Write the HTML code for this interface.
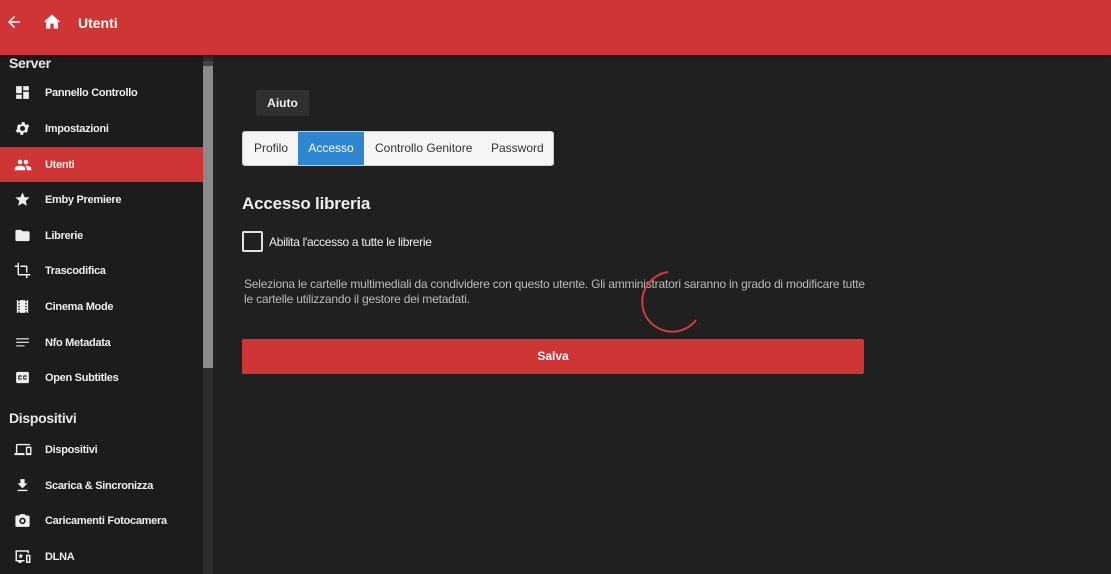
<!DOCTYPE html>
<html><head><meta charset="utf-8"><style>
*{margin:0;padding:0;box-sizing:border-box}
body{width:1111px;height:574px;overflow:hidden;background:#202020;font-family:"Liberation Sans",sans-serif;position:relative;color:#ddd}
.hdr{position:absolute;left:0;top:0;width:1111px;height:55px;background:#cf3535;box-shadow:0 1px 4px rgba(0,0,0,.5);z-index:2}
.hdr .t{position:absolute;left:78px;top:15px;font-size:14px;font-weight:bold;color:#fff}
.side{position:absolute;left:0;top:55px;width:203px;height:519px;background:#1c1c1c}
.sb{position:absolute;left:203px;top:55px;width:10px;height:519px;background:#2d2d2d}
.sb .a{position:absolute;left:0;top:6px;width:10px;height:10px;background:#444}
.sb .th{position:absolute;left:0;top:11px;width:10px;height:302px;background:#8a8a8a}
.sec{position:absolute;left:9px;font-size:14px;font-weight:bold;color:#e6e6e6;letter-spacing:-.3px}
.it{position:absolute;left:0;width:203px;height:35px;font-size:11px;font-weight:bold;color:#eee;letter-spacing:-.3px}
.it span{position:absolute;left:45px;top:12px}
.it svg{position:absolute;left:14px;top:9px}
.it.on{background:#cf3535}
.btn{position:absolute;left:256px;top:90px;width:53px;height:26px;background:#303030;border-radius:2px;color:#eee;font-size:12px;font-weight:bold;text-align:center;line-height:26px}
.tabs{position:absolute;left:242px;top:131px;width:312px;height:35px;background:#f5f5f5;border:1px solid #ccc;border-radius:3px;font-size:12px;color:#333}
.tabs div{position:absolute;top:0;height:33px;line-height:32px;white-space:nowrap}
h2{position:absolute;left:242px;top:194px;font-size:17px;font-weight:bold;color:#eee;letter-spacing:-.2px}
.cb{position:absolute;left:242px;top:231px;width:21px;height:21px;border:2px solid #e0e0e0;border-radius:2px}
.cbl{position:absolute;left:269px;top:235px;font-size:12px;color:#eee;letter-spacing:-.3px}
.p{position:absolute;left:244px;top:277px;width:630px;font-size:12px;line-height:15px;color:#bbb;letter-spacing:-.2px}
.save{position:absolute;left:242px;top:339px;width:622px;height:35px;background:#cf3535;border-radius:2px;color:#fff;font-size:12px;font-weight:bold;text-align:center;line-height:35px}
</style></head><body>
<div class="hdr">
<svg style="position:absolute;left:5px;top:13px" width="18" height="18" viewBox="0 0 24 24"><path d="M20 11H7.8l5.6-5.6L12 4l-8 8 8 8 1.4-1.4L7.8 13H20z" fill="#fff"/></svg>
<svg style="position:absolute;left:42px;top:12px" width="20" height="20" viewBox="0 0 24 24"><path d="M10 20v-6h4v6h5v-8h3L12 3 2 12h3v8z" fill="#fff"/></svg>
<div class="t">Utenti</div>
</div>
<div class="side">
<div class="sec" style="top:0px">Server</div>
</div>
<div class="sb"><div class="a"></div><div class="th"></div></div>

<div class="it" style="top:75px"><svg width="17" height="17" viewBox="0 0 24 24"><path d="M3 13h8V3H3zm0 8h8v-6H3zm10 0h8V11h-8zm0-18v6h8V3z" fill="#eee"/></svg><span>Pannello Controllo</span></div>
<div class="it" style="top:111px"><svg width="17" height="17" viewBox="0 0 24 24"><path d="M19.4 13a7.5 7.5 0 000-2l2.1-1.6-2-3.5-2.5 1a7 7 0 00-1.7-1L15 3h-4l-.4 2.9a7 7 0 00-1.7 1l-2.5-1-2 3.5L4.6 11a7.5 7.5 0 000 2l-2.1 1.6 2 3.5 2.5-1a7 7 0 001.7 1L9 21h4l.4-2.9a7 7 0 001.7-1l2.5 1 2-3.5zM12 15.5A3.5 3.5 0 1112 8.5a3.5 3.5 0 010 7z" fill="#eee"/></svg><span>Impostazioni</span></div>
<div class="it on" style="top:147px"><svg width="18" height="18" viewBox="0 0 24 24"><path d="M16 11a3 3 0 100-6 3 3 0 000 6zm-8 0a3 3 0 100-6 3 3 0 000 6zm0 2c-2.3 0-7 1.2-7 3.5V19h14v-2.5C15 14.2 10.3 13 8 13zm8 0c-.3 0-.6 0-1 .1 1.2.8 2 2 2 3.4V19h6v-2.5c0-2.3-4.7-3.5-7-3.5z" fill="#fff"/></svg><span>Utenti</span></div>
<div class="it" style="top:182px"><svg width="17" height="17" viewBox="0 0 24 24"><path d="M12 17.3L18.2 21l-1.6-7L22 9.2l-7.2-.6L12 2 9.2 8.6 2 9.2 7.5 14l-1.7 7z" fill="#eee"/></svg><span>Emby Premiere</span></div>
<div class="it" style="top:218px"><svg width="17" height="17" viewBox="0 0 24 24"><path d="M10 4H4a2 2 0 00-2 2v12a2 2 0 002 2h16a2 2 0 002-2V8a2 2 0 00-2-2h-8z" fill="#eee"/></svg><span>Librerie</span></div>
<div class="it" style="top:253px"><svg width="17" height="17" viewBox="0 0 24 24"><path d="M17 15h2V7a2 2 0 00-2-2H9v2h8zM7 17V1H5v4H1v2h4v10a2 2 0 002 2h10v4h2v-4h4v-2z" fill="#eee"/></svg><span>Trascodifica</span></div>
<div class="it" style="top:289px"><svg width="17" height="17" viewBox="0 0 24 24"><path d="M18 3v2h-2V3H8v2H6V3H4v18h2v-2h2v2h8v-2h2v2h2V3zM8 17H6v-2h2zm0-4H6v-2h2zm0-4H6V7h2zm10 8h-2v-2h2zm0-4h-2v-2h2zm0-4h-2V7h2z" fill="#eee"/></svg><span>Cinema Mode</span></div>
<div class="it" style="top:325px"><svg width="17" height="17" viewBox="0 0 24 24"><path d="M3 6h18v1.5H3zm0 5h18v1.5H3zm0 5h12v1.5H3z" fill="#eee"/></svg><span>Nfo Metadata</span></div>
<div class="it" style="top:360px"><svg width="17" height="17" viewBox="0 0 24 24"><path d="M19 4H5a2 2 0 00-2 2v12a2 2 0 002 2h14a2 2 0 002-2V6a2 2 0 00-2-2zM11 11H9.5v-.5h-2v3h2V13H11v1a1 1 0 01-1 1H7a1 1 0 01-1-1v-4a1 1 0 011-1h3a1 1 0 011 1zm7 0h-1.5v-.5h-2v3h2V13H18v1a1 1 0 01-1 1h-3a1 1 0 01-1-1v-4a1 1 0 011-1h3a1 1 0 011 1z" fill="#eee"/></svg><span>Open Subtitles</span></div>
<div class="sec" style="top:410px">Dispositivi</div>
<div class="it" style="top:432px"><svg width="18" height="17" viewBox="0 0 24 24"><path d="M4 6h18V4H4a2 2 0 00-2 2v11H0v3h14v-3H4zm19 2h-6a1 1 0 00-1 1v10a1 1 0 001 1h6a1 1 0 001-1V9a1 1 0 00-1-1zm-1 9h-4v-7h4z" fill="#eee"/></svg><span>Dispositivi</span></div>
<div class="it" style="top:468px"><svg width="17" height="17" viewBox="0 0 24 24"><path d="M19 9h-4V3H9v6H5l7 7zM5 18v2h14v-2z" fill="#eee"/></svg><span>Scarica &amp; Sincronizza</span></div>
<div class="it" style="top:503px"><svg width="17" height="17" viewBox="0 0 24 24"><path d="M20 5h-3.2L15 3H9L7.2 5H4a2 2 0 00-2 2v12a2 2 0 002 2h16a2 2 0 002-2V7a2 2 0 00-2-2zm-8 12a4.5 4.5 0 110-9 4.5 4.5 0 010 9zm0-2.3a2.2 2.2 0 100-4.4 2.2 2.2 0 000 4.4z" fill="#eee"/></svg><span>Caricamenti Fotocamera</span></div>
<div class="it" style="top:539px"><svg width="18" height="18" viewBox="0 0 24 24"><path d="M2 3h18v4h-2V5H4v11h10v2h-4v2H6v-2H2zm14 6h6v11h-6zm2 2v7h2v-7zM9 7l1 2.5 2.5.2-2 1.7.6 2.6L9 12.5 6.9 14l.6-2.6-2-1.7 2.5-.2z" fill="#eee"/></svg><span>DLNA</span></div>

<div class="btn">Aiuto</div>
<div class="tabs">
<div style="left:11px">Profilo</div>
<div style="left:55px;width:66px;background:#2f86d0;color:#fff;text-align:center">Accesso</div>
<div style="left:132px">Controllo Genitore</div>
<div style="left:248px">Password</div>
</div>
<h2>Accesso libreria</h2>
<div class="cb"></div>
<div class="cbl">Abilita l'accesso a tutte le librerie</div>
<div class="p">Seleziona le cartelle multimediali da condividere con questo utente. Gli amministratori saranno in grado di modificare tutte le cartelle utilizzando il gestore dei metadati.</div>
<svg style="position:absolute;left:632px;top:262px" width="80" height="80" viewBox="0 0 80 80"><path d="M36 10 A30 30 0 1 0 64 58" fill="none" stroke="#d63a3a" stroke-width="2"/></svg>
<div class="save">Salva</div>
</body></html>
